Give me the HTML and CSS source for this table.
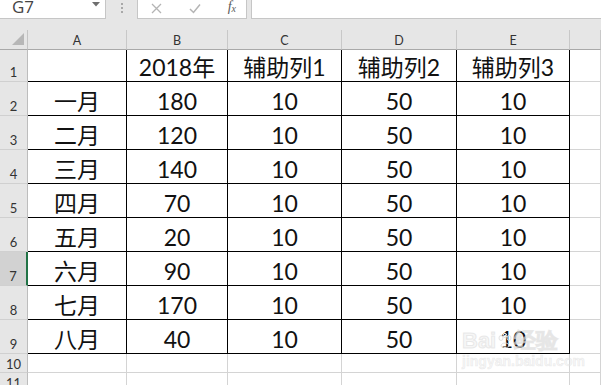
FILE: index.html
```html
<!DOCTYPE html>
<html>
<head>
<meta charset="utf-8">
<link rel="stylesheet" href="styles.css">
</head>
<body>
<div class="app">
  <div class="toolbar">
    <div class="namebox">
      <span class="name">G7</span>
      <svg class="dd" width="8" height="5" viewBox="0 0 8 5"><path d="M0 0H8L4 4.5Z" fill="#6e6e6e"/></svg>
    </div>
    <div class="grip"><i></i><i></i><i></i></div>
    <div class="fxbox">
      <svg class="ico" width="11" height="11" viewBox="0 0 11 11"><path d="M1 1L10 10M10 1L1 10" stroke="#b4b4b4" stroke-width="1.3" fill="none"/></svg>
      <svg class="ico" width="12" height="11" viewBox="0 0 12 11"><path d="M1 6L4.5 9.5L11 1.5" stroke="#b4b4b4" stroke-width="1.5" fill="none"/></svg>
      <span class="fx">f<sub>x</sub></span>
    </div>
    <div class="inputbox"></div>
  </div>
  <div class="sheet">
    <div class="corner"><svg width="12" height="12" viewBox="0 0 12 12"><path d="M12 0V12H0Z" fill="#b7b7b7"/></svg></div>
    <div class="ch">A</div><div class="ch">B</div><div class="ch">C</div><div class="ch">D</div><div class="ch">E</div><div class="ch"></div>

    <div class="rh r1">1</div><div class="c t"></div><div class="c t">2018年</div><div class="c t">辅助列1</div><div class="c t">辅助列2</div><div class="c t">辅助列3</div><div class="c g"></div>
    <div class="rh">2</div><div class="c t">一月</div><div class="c t">180</div><div class="c t">10</div><div class="c t">50</div><div class="c t">10</div><div class="c g"></div>
    <div class="rh">3</div><div class="c t">二月</div><div class="c t">120</div><div class="c t">10</div><div class="c t">50</div><div class="c t">10</div><div class="c g"></div>
    <div class="rh">4</div><div class="c t">三月</div><div class="c t">140</div><div class="c t">10</div><div class="c t">50</div><div class="c t">10</div><div class="c g"></div>
    <div class="rh">5</div><div class="c t">四月</div><div class="c t">70</div><div class="c t">10</div><div class="c t">50</div><div class="c t">10</div><div class="c g"></div>
    <div class="rh">6</div><div class="c t">五月</div><div class="c t">20</div><div class="c t">10</div><div class="c t">50</div><div class="c t">10</div><div class="c g"></div>
    <div class="rh sel">7</div><div class="c t">六月</div><div class="c t">90</div><div class="c t">10</div><div class="c t">50</div><div class="c t">10</div><div class="c g"></div>
    <div class="rh">8</div><div class="c t">七月</div><div class="c t">170</div><div class="c t">10</div><div class="c t">50</div><div class="c t">10</div><div class="c g"></div>
    <div class="rh">9</div><div class="c t">八月</div><div class="c t">40</div><div class="c t">10</div><div class="c t">50</div><div class="c t">10</div><div class="c g"></div>
    <div class="rh sm">10</div><div class="c g"></div><div class="c g"></div><div class="c g"></div><div class="c g"></div><div class="c g"></div><div class="c g"></div>
    <div class="rh sm">11</div><div class="c g"></div><div class="c g"></div><div class="c g"></div><div class="c g"></div><div class="c g"></div><div class="c g"></div>
  </div>
  <div class="watermark">
    <div class="wm1">Bai<svg width="14" height="16" viewBox="0 0 14 16"><g fill="none" stroke="#e2e2e2" stroke-width="1"><ellipse cx="3" cy="5" rx="2" ry="2.5"/><ellipse cx="7" cy="2.5" rx="1.8" ry="2.2"/><ellipse cx="11" cy="5" rx="2" ry="2.5"/><path d="M3 13C3 9 11 9 11 13C11 15 3 15 3 13Z"/></g></svg>经验</div>
    <div class="wm2">jingyan.baidu.com</div>
  </div>
</div>
</body>
</html>
```
FILE: styles.css
```css
* { box-sizing: border-box; }
html, body { margin: 0; padding: 0; background: #fff; }
.app {
  position: relative;
  width: 601px;
  height: 385px;
  overflow: hidden;
  font-family: Lato, "Noto Sans CJK SC", sans-serif;
}
.toolbar {
  height: 30px;
  background: #e6e6e6;
  display: flex;
  align-items: flex-start;
}
.namebox {
  width: 106px;
  height: 19px;
  background: #fff;
  border-right: 1px solid #c6c6c6;
  border-bottom: 1px solid #c6c6c6;
  display: flex;
  align-items: flex-end;
  justify-content: space-between;
  padding: 0 5px 6px 12px;
  overflow: hidden;
}
.name {
  font-family: "Open Sans", sans-serif;
  font-size: 17px;
  line-height: 12px;
  color: #444;
  margin-bottom: -1px;
}
.dd { margin-bottom: 5px; }
.grip {
  width: 31px;
  height: 19px;
  display: flex;
  flex-direction: column;
  align-items: center;
  gap: 2px;
  padding-top: 3px;
}
.grip i {
  display: block;
  width: 2px;
  height: 2px;
  background: #a8a8a8;
}
.fxbox {
  width: 110px;
  height: 19px;
  background: #fff;
  border: 1px solid #c6c6c6;
  border-top: none;
  display: flex;
  align-items: center;
  padding: 0 10px 2px 13px;
  justify-content: space-between;
}
.fx {
  font-family: "Liberation Serif", serif;
  font-style: italic;
  font-size: 14px;
  color: #5a5a5a;
  line-height: 12px;
}
.fx sub { font-size: 10px; vertical-align: -1px; }
.inputbox {
  margin-left: 4px;
  flex: 1;
  height: 19px;
  background: #fff;
  border-left: 1px solid #c6c6c6;
  border-bottom: 1px solid #c6c6c6;
}
.sheet {
  display: grid;
  grid-template-columns: 28px 99px 101px 114px 115px 113px 31px;
  grid-template-rows: 20px 32px repeat(8, 34px) 19px 19px;
}
.corner {
  background: #e6e6e6;
  border-right: 1px solid #c4c4c4;
  border-bottom: 1px solid #a9a9a9;
  display: flex;
  align-items: flex-end;
  justify-content: flex-end;
  padding: 0 3px 4px 0;
}
.ch {
  background: #e6e6e6;
  border-right: 1px solid #c8c8c8;
  border-bottom: 1px solid #a9a9a9;
  font-size: 12.5px;
  color: #333;
  display: flex;
  align-items: center;
  justify-content: center;
  padding-top: 1px;
}
.rh {
  background: #e6e6e6;
  border-right: 1px solid #bdbdbd;
  border-bottom: 1px solid #d0d0d0;
  font-size: 13px;
  color: #333;
  display: flex;
  align-items: flex-end;
  justify-content: center;
  padding-bottom: 2px;
  line-height: 1;
}
.rh.sm { padding-bottom: 1px; }
.rh.sel {
  background: #d2d2d2;
  border-right: 2px solid #217346;
}
.c {
  border-right: 1px solid #d4d4d4;
  border-bottom: 1px solid #d4d4d4;
}
.c.t {
  border-right: 1px solid #000;
  border-bottom: 1px solid #000;
  font-size: 23px;
  line-height: 1;
  color: #111;
  display: flex;
  align-items: flex-end;
  justify-content: center;
  padding-bottom: 2px;
  white-space: nowrap;
}
.watermark {
  position: absolute;
  left: 462px;
  top: 329px;
  color: rgba(235, 235, 235, 0.45);
  font-family: "Liberation Sans", sans-serif;
  pointer-events: none;
}
.wm1 {
  display: flex;
  align-items: center;
  font-size: 22px;
  font-weight: bold;
  line-height: 24px;
  -webkit-text-stroke: 1px rgba(215, 215, 215, 0.5);
}
.wm1 svg { margin: 0 2px; }
.wm2 {
  font-size: 14px;
  font-weight: bold;
  line-height: 16px;
  -webkit-text-stroke: 0.5px rgba(215, 215, 215, 0.5);
}
```
